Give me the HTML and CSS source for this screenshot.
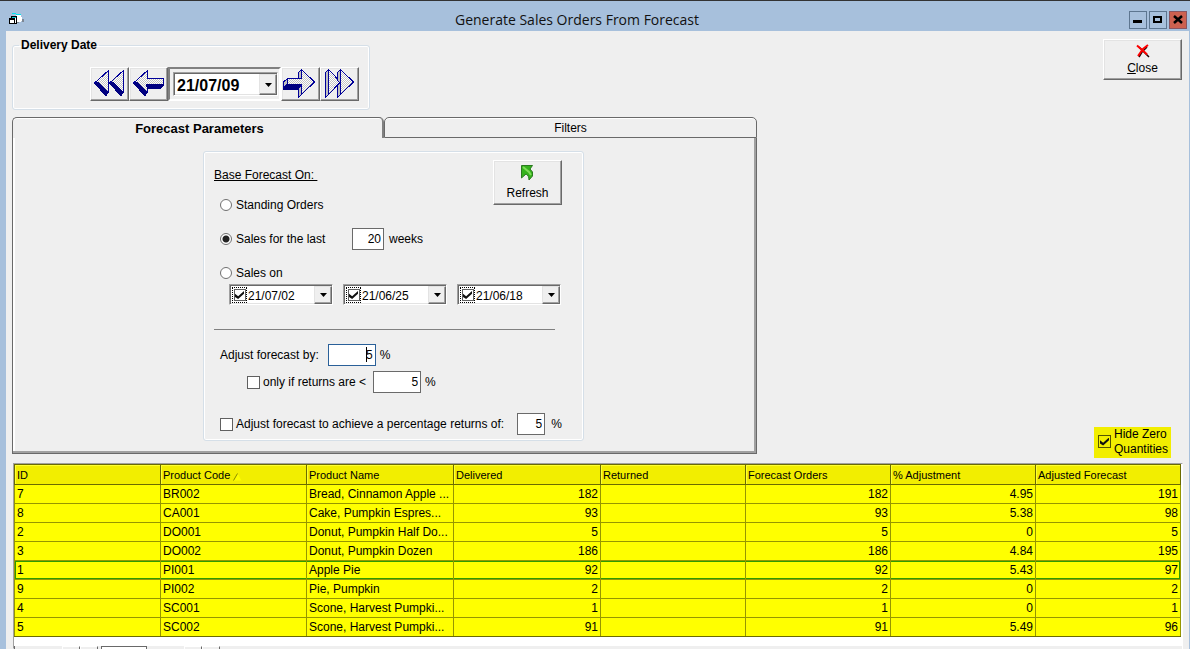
FILE: index.html
```html
<!DOCTYPE html>
<html lang="en">
<head>
<meta charset="utf-8">
<title>Generate Sales Orders From Forecast</title>
<link rel="stylesheet" href="styles.css">
</head>
<body>
<header class="titlebar">
  <svg class="app-icon" width="17" height="14" viewBox="0 0 17 14" shape-rendering="crispEdges">
    <path d="M8 4h6v3h1v1h-2v1H8z" fill="#fff"/><path d="M4 0h4v1H4zM8 1h5v1H8z" fill="#00e5f0"/><path d="M8 2h5v2H8z" fill="#fff"/>
    <path d="M14 6h2v3h-2zM9 9h2v1H9z" fill="#7d8794"/>
    <path d="M3.500 3.500h5v7h-5z" fill="#fff" stroke="#000"/><path d="M4 4h4v1H4z" fill="#00c8d4"/>
    <path d="M1.500 5.500h5v5h-5z" fill="#fff" stroke="#000"/><path d="M1 5h6v2H1z" fill="#000"/>
  </svg>
  <h1 class="title">Generate Sales Orders From Forecast</h1>
  <div class="window-buttons">
    <button class="win-btn" aria-label="Minimize"><svg width="16" height="16" viewBox="0 0 16 16"><path d="M3 8h9v3H3z"/></svg></button>
    <button class="win-btn" aria-label="Maximize"><svg width="16" height="16" viewBox="0 0 16 16"><path fill-rule="evenodd" d="M3 4h9v7H3zM5 6v3h5V6z"/></svg></button>
    <button class="win-btn win-close" aria-label="Close window"><svg width="16" height="16" viewBox="0 0 16 16"><path d="M4 4l8 7M12 4l-8 7" stroke="#000" stroke-width="2.500"/></svg></button>
  </div>
</header>

<main class="window">
  <div class="top-row">
    <fieldset class="group delivery">
      <legend>Delivery Date</legend>
      <div class="date-nav">
        <button class="raised nav-btn" aria-label="First date">
          <svg width="37" height="32" viewBox="0 0 37 32" shape-rendering="crispEdges">
            <defs><pattern id="dither" width="2" height="2" patternUnits="userSpaceOnUse"><path d="M0 0h2v2H0z" fill="#fff"/><path d="M0 0h1v1H0zM1 1h1v1H1z" fill="#c4c4c4"/></pattern></defs>
            <path d="M3.500 15L17.500 2.500v22z" fill="url(#dither)" stroke="#00009a"/><path d="M3 15l4-1 11 10-3 5z" fill="#000080"/>
            <path d="M18.500 15L32.500 2.500v22z" fill="url(#dither)" stroke="#00009a"/><path d="M18 15l4-1 11 10-3 5z" fill="#000080"/>
          </svg>
        </button>
        <button class="raised nav-btn" aria-label="Previous date">
          <svg width="37" height="32" viewBox="0 0 37 32" shape-rendering="crispEdges">
            <path d="M3.500 15L17.500 2.500v8h16v6h-16v8z" fill="url(#dither)" stroke="#00009a"/>
            <path d="M3 15l4-1 11 10-3 5zM16 16h18v1l-3 4H17z" fill="#000080"/>
          </svg>
        </button>
        <div class="date-frame">
          <div class="combo combo-large">
            <input class="combo-input" aria-label="Delivery date" value="21/07/09">
            <button class="combo-btn" aria-label="Pick delivery date"><svg width="7" height="4" viewBox="0 0 7 4"><path d="M0 0h7L3.500 4z"/></svg></button>
          </div>
        </div>
        <button class="raised nav-btn" aria-label="Next date">
          <svg width="37" height="32" viewBox="0 0 37 32" shape-rendering="crispEdges">
            <path d="M5.500 10.500h14v-9L32.500 14 19.500 26.500v-10H2z" fill="url(#dither)" stroke="#00009a"/>
            <path d="M16.500 4.500l3-3v9h-3zM16.500 20l3-3v9.500l-3 3zM1.500 14l4-3.500V16l-4 3z" fill="#c0c0c0" stroke="#00009a"/>
            <path d="M1 20l4-4h14l-3 6H1z" fill="#000080"/>
          </svg>
        </button>
        <button class="raised nav-btn" aria-label="Last date">
          <svg width="37" height="32" viewBox="0 0 37 32" shape-rendering="crispEdges">
            <path d="M7.500 1.500L19.500 14 7.500 26.500z" fill="url(#dither)" stroke="#00009a"/><path d="M4.500 4.500l3-3v25l-3 3z" fill="#c0c0c0" stroke="#00009a"/>
            <path d="M19.500 1.500L32.500 14 19.500 26.500z" fill="url(#dither)" stroke="#00009a"/><path d="M16.500 4.500l3-3v25l-3 3v-12l3-2.500-3-2.500z" fill="#c0c0c0" stroke="#00009a"/>
          </svg>
        </button>
      </div>
    </fieldset>
    <button class="raised close-btn">
      <svg width="16" height="14" viewBox="0 0 16 14"><path d="M4 3l7 7 3 3M12 3L7 8l-3 5" stroke="#200" stroke-width="1.500" fill="none"/><path d="M2 1.500l8 7 2 2M13 1L8 5l-5 7" stroke="#f00" stroke-width="2" fill="none"/></svg>
      <span><u>C</u>lose</span>
    </button>
  </div>

  <section class="tabs">
    <div class="tab-strip" role="tablist">
      <button class="tab tab-active" role="tab" aria-selected="true">Forecast Parameters</button>
      <button class="tab" role="tab" aria-selected="false">Filters</button>
    </div>
    <div class="tab-body">
      <div class="group params">
        <div class="params-head">
          <h2 class="base-title">Base Forecast On:&nbsp;</h2>
          <button class="raised refresh-btn">
            <svg width="13" height="16" viewBox="0 0 13 16"><path d="M.5.500h11L9 4l2.500 3v4L8 15c0-3-1-5-3-6l-4.500 4z" fill="#35b21c" stroke="#2b7a20"/><path d="M2 2l6 5 2 3" stroke="#7edc58" stroke-width="2" fill="none"/></svg>
            <span>Refresh</span>
          </button>
        </div>
        <div class="field standing">
          <label class="choice"><input type="radio" name="base" class="radio">Standing Orders</label>
        </div>
        <div class="field last-weeks">
          <label class="choice choice-weeks"><input type="radio" name="base" class="radio" checked>Sales for the last</label>
          <input class="num num-weeks" id="weeks" value="20">
          <label for="weeks">weeks</label>
        </div>
        <div class="field sales-on">
          <label class="choice"><input type="radio" name="base" class="radio">Sales on</label>
        </div>
        <div class="dates">
          <div class="combo"><span class="focus-box"><input type="checkbox" class="check check-small" aria-label="Use 21/07/02" checked></span><input class="combo-input" aria-label="Sales date 1" value="21/07/02"><button class="combo-btn" aria-label="Pick sales date 1"><svg width="7" height="4" viewBox="0 0 7 4"><path d="M0 0h7L3.500 4z"/></svg></button></div>
          <div class="combo"><span class="focus-box"><input type="checkbox" class="check check-small" aria-label="Use 21/06/25" checked></span><input class="combo-input" aria-label="Sales date 2" value="21/06/25"><button class="combo-btn" aria-label="Pick sales date 2"><svg width="7" height="4" viewBox="0 0 7 4"><path d="M0 0h7L3.500 4z"/></svg></button></div>
          <div class="combo"><span class="focus-box"><input type="checkbox" class="check check-small" aria-label="Use 21/06/18" checked></span><input class="combo-input" aria-label="Sales date 3" value="21/06/18"><button class="combo-btn" aria-label="Pick sales date 3"><svg width="7" height="4" viewBox="0 0 7 4"><path d="M0 0h7L3.500 4z"/></svg></button></div>
        </div>
        <hr class="rule">
        <div class="field adjust">
          <label for="adjust">Adjust forecast by:</label>
          <span class="caret-box"><input class="num num-wide num-focus" id="adjust" value="5"></span>
          <span>%</span>
        </div>
        <div class="field only-if">
          <label class="choice choice-check"><input type="checkbox" class="check">only if returns are &lt;</label>
          <input class="num num-wide" aria-label="Returns below percent" value="5">
          <span>%</span>
        </div>
        <div class="field achieve">
          <label class="choice choice-check"><input type="checkbox" class="check">Adjust forecast to achieve a percentage returns of:</label>
          <input class="num num-small" aria-label="Target returns percent" value="5">
          <span>%</span>
        </div>
      </div>
    </div>
  </section>

  <label class="hide-zero"><input type="checkbox" class="check check-yellow" checked><span>Hide Zero<br>Quantities</span></label>

  <div class="grid-frame">
    <table class="grid">
      <colgroup><col class="c-id"><col class="c-code"><col class="c-name"><col class="c-del"><col class="c-num"><col class="c-num"><col class="c-num"><col class="c-num"></colgroup>
      <thead>
        <tr><th>ID</th><th>Product Code <svg class="sort" width="9" height="8" viewBox="0 0 9 8"><path d="M.5 7.500L4.500.5 8.500 7.500z" fill="#fdfd00"/><path d="M.5 7.500L4.500.5" stroke="#8a8a00" fill="none"/></svg></th><th>Product Name</th><th>Delivered</th><th>Returned</th><th>Forecast Orders</th><th>% Adjustment</th><th>Adjusted Forecast</th></tr>
      </thead>
      <tbody>
        <tr><td>7</td><td>BR002</td><td>Bread, Cinnamon Apple ...</td><td>182</td><td></td><td>182</td><td>4.95</td><td>191</td></tr>
        <tr><td>8</td><td>CA001</td><td>Cake, Pumpkin Espres...</td><td>93</td><td></td><td>93</td><td>5.38</td><td>98</td></tr>
        <tr><td>2</td><td>DO001</td><td>Donut, Pumpkin Half Do...</td><td>5</td><td></td><td>5</td><td>0</td><td>5</td></tr>
        <tr><td>3</td><td>DO002</td><td>Donut, Pumpkin Dozen</td><td>186</td><td></td><td>186</td><td>4.84</td><td>195</td></tr>
        <tr class="current"><td>1</td><td>PI001</td><td>Apple Pie</td><td>92</td><td></td><td>92</td><td>5.43</td><td>97</td></tr>
        <tr><td>9</td><td>PI002</td><td>Pie, Pumpkin</td><td>2</td><td></td><td>2</td><td>0</td><td>2</td></tr>
        <tr><td>4</td><td>SC001</td><td>Scone, Harvest Pumpki...</td><td>1</td><td></td><td>1</td><td>0</td><td>1</td></tr>
        <tr><td>5</td><td>SC002</td><td>Scone, Harvest Pumpki...</td><td>91</td><td></td><td>91</td><td>5.49</td><td>96</td></tr>
      </tbody>
    </table>
    <div class="record-nav">
      <button class="rec-btn" aria-label="First record"></button><button class="rec-btn" aria-label="Previous record"></button>
      <input class="rec-input" aria-label="Record number">
      <button class="rec-btn" aria-label="Next record"></button><button class="rec-btn" aria-label="Last record"></button>
    </div>
  </div>
</main>
</body>
</html>
```
FILE: styles.css
```css
* { box-sizing: border-box; }
html, body { height: 100%; }
body {
  margin: 0;
  overflow: hidden;
  display: flex;
  flex-direction: column;
  background: #a7c0dc;
  border-top: 1px solid #333;
  font: 12px/14px "Liberation Sans", Arial, sans-serif;
  color: #000;
}
button, input { font: inherit; color: inherit; margin: 0; padding: 0; border-radius: 0; }
input { outline: none; min-width: 0; }
svg { display: block; }

.titlebar { display: flex; align-items: center; height: 30px; padding: 8px 3px 0 8px; flex: none; }
.title { flex: 1; margin: 0; text-align: center; font: 14px/20px "Open Sans", sans-serif; color: #111; }
.window-buttons { display: flex; gap: 2px; }
.win-btn { width: 18px; height: 18px; border: 1px solid #5d7690; background: #a7c0dc; }
.win-close { background: #cd6150; border-color: #8a5560; }

.window {
  flex: 1;
  min-height: 0;
  display: flex;
  flex-direction: column;
  margin: 0 1px 0 6px;
  padding: 7px 6px 0 6px;
  background: #efefef;
}
.top-row { display: flex; justify-content: space-between; align-items: flex-start; }

.group { border: 1px solid #d5dfe8; border-radius: 3px; box-shadow: inset 0 0 0 1px #fff; margin: 0; }
.delivery { width: 358px; height: 72px; padding: 15px 10px 0 77px; }
.delivery legend { margin-left: -71px; padding: 0 2px; font-size: 12px; line-height: 14px; font-weight: bold; }
.date-nav { display: flex; }

.raised {
  background: #efefef;
  border: 1px solid;
  border-color: #fff #696969 #696969 #fff;
  box-shadow: inset -1px -1px 0 #a0a0a0, inset 1px 1px 0 #e3e3e3;
}
.nav-btn { flex: none; width: 39px; height: 34px; }
.date-frame { flex: none; width: 113px; height: 34px; padding: 3px 1px 3px 3px; border: 2px solid; border-color: #808080 #fff #fff #808080; }

.combo {
  display: flex;
  width: 104px;
  height: 21px;
  background: #fff;
  border: 1px solid;
  border-color: #a0a0a0 #fff #fff #a0a0a0;
  box-shadow: inset 1px 1px 0 #696969, inset -1px -1px 0 #e3e3e3;
  padding: 1px 0 0 2px;
}
.combo-input { flex: 1; width: 0; border: 0; background: none; padding-top: 1px; }
.combo-btn {
  width: 18px;
  display: flex;
  align-items: center;
  justify-content: center;
  background: #efefef;
  border: 1px solid;
  border-color: #e3e3e3 #696969 #696969 #e3e3e3;
  box-shadow: inset -1px -1px 0 #a0a0a0;
}
.combo-large { width: 100%; height: 100%; }
.combo-large .combo-input { padding: 2px 0 0 1px; font-size: 16px; font-weight: bold; }
.focus-box { display: flex; border: 1px dotted #000; width: 15px; height: 16px; margin: 1px 1px 0 0; align-items: center; justify-content: center; }

.close-btn, .refresh-btn { display: flex; flex-direction: column; align-items: center; justify-content: center; gap: 3px; }
.close-btn { width: 79px; height: 41px; margin: 1px 1px 0 0; }
.refresh-btn { width: 69px; height: 45px; gap: 5px; margin: 0 1px 1px 0; }

.tabs { width: 745px; margin-top: 7px; }
.tab-strip { display: flex; height: 21px; }
.tab {
  flex: 1;
  background: #efefef;
  border: 1px solid #696969;
  border-radius: 5px 5px 0 0;
  box-shadow: inset 0 1px 0 #fff;
}
.tab-active { flex: none; width: 372px; border-bottom: 0; border-right: 2px solid #808080; font-size: 13px; font-weight: bold; padding: 2px 0 0 4px; }
.tab-body {
  height: 316px;
  padding: 13px 0 0 190px;
  border: 1px solid #696969;
  border-top: 0;
  box-shadow: inset -2px -2px 0 #a0a0a0, inset 2px 0 0 #fff;
}
.params { width: 381px; height: 290px; padding: 8px 20px 0 10px; }
.params-head { display: flex; justify-content: space-between; }
.base-title { margin: 8px 0 0; font-size: 12px; line-height: 14px; font-weight: normal; text-decoration: underline; height: 16px; }

.field { display: flex; align-items: center; height: 22px; }
.choice { display: flex; align-items: center; gap: 4px; }
.choice-check { gap: 3px; }
.choice-weeks { width: 108px; }
.radio {
  appearance: none;
  width: 12px;
  height: 12px;
  border: 1px solid #707070;
  border-radius: 50%;
  background: #fff;
}
.radio:checked { background: radial-gradient(circle, #222 3px, #fff 4px); }
.check {
  appearance: none;
  width: 13px;
  height: 13px;
  border: 1px solid #606060;
  background: #fff;
  display: grid;
  place-items: center;
}
.check:checked::before { content: ""; width: 9px; height: 8px; background: #111; clip-path: polygon(0 35%, 35% 65%, 100% 0, 100% 35%, 35% 100%, 0 75%); }
.check-small { width: 12px; height: 12px; }
.check-yellow { background: #f2ee00; border-color: #555500; }
.num { height: 22px; border: 1px solid #6a6a6a; background: #fff; text-align: right; padding-right: 2px; }
.num-weeks { width: 32px; margin: 0 5px 0 24px; }
.num-wide { width: 48px; margin-right: 4px; }
.num-small { width: 28px; margin: 0 6px 0 13px; }
.num-focus { border-color: #2a6099; }
.caret-box { position: relative; display: flex; margin-left: 9px; }
.caret-box::after { content: ""; position: absolute; left: 38px; top: 3px; width: 1px; height: 15px; background: #000; }
.standing { padding-left: 6px; margin-top: -12px; }
.last-weeks { padding-left: 6px; margin-top: 12px; }
.sales-on { padding-left: 6px; margin-top: 12px; }
.dates { display: flex; gap: 10px; padding-left: 15px; }
.rule { width: 341px; margin: 24px 0 14px; border: 0; border-top: 1px solid #808080; }
.adjust { padding-left: 6px; }
.only-if { padding-left: 33px; margin-top: 5px; }
.only-if .num { margin-left: 7px; }
.achieve { padding-left: 6px; margin-top: 20px; }

.hide-zero {
  align-self: flex-end;
  display: flex;
  align-items: center;
  gap: 3px;
  width: 77px;
  height: 31px;
  margin: -27px 12px 5px 0;
  padding: 0 0 2px 4px;
  background: #f2ee00;
  line-height: 15px;
}

.grid-frame {
  flex: 1;
  margin-left: 1px;
  background: #fff;
  border: 1px solid;
  border-color: #a0a0a0 #fff #fff #a0a0a0;
  display: flex;
  flex-direction: column;
  min-height: 0;
}
.grid { width: calc(100% - 1px); table-layout: fixed; border-collapse: collapse; background: #ff0; flex: none; }
.grid th, .grid td { height: 19px; padding: 0 2px; text-align: left; white-space: nowrap; overflow: hidden; border: 1px solid #969600; line-height: 14px; }
.grid th { height: 20px; font-size: 11px; font-weight: normal; background: #f2ee00; border-color: #6b6b00; box-shadow: inset 1px 1px 0 #ff3; }
.grid td:nth-child(n+4) { text-align: right; }
.grid tbody tr:last-child td { border-bottom-color: #6b6b00; }
.grid .current td { box-shadow: inset 0 1px 0 #2f9a00, inset 0 -1px 0 #2f9a00; }
.grid .current td:first-child { box-shadow: inset 1px 1px 0 #2f9a00, inset 0 -1px 0 #2f9a00; }
.grid .current td:last-child { box-shadow: inset -1px -1px 0 #2f9a00, inset 0 1px 0 #2f9a00; }
.c-id, .c-code { width: 146px; }
.c-name, .c-del { width: 147px; }
.sort { display: inline-block; vertical-align: -2px; }
.record-nav { display: flex; height: 12px; flex: 1; margin-top: 9px; padding-left: 47px; background: #efefef; border-left: 1px solid #696969; }
.rec-btn { width: 18px; height: 18px; background: #efefef; border: 1px solid; border-color: #fff #696969 #696969 #fff; }
.rec-input { width: 46px; height: 18px; margin: 0 37px 0 3px; border: 1px solid #696969; background: #fff; }
```
